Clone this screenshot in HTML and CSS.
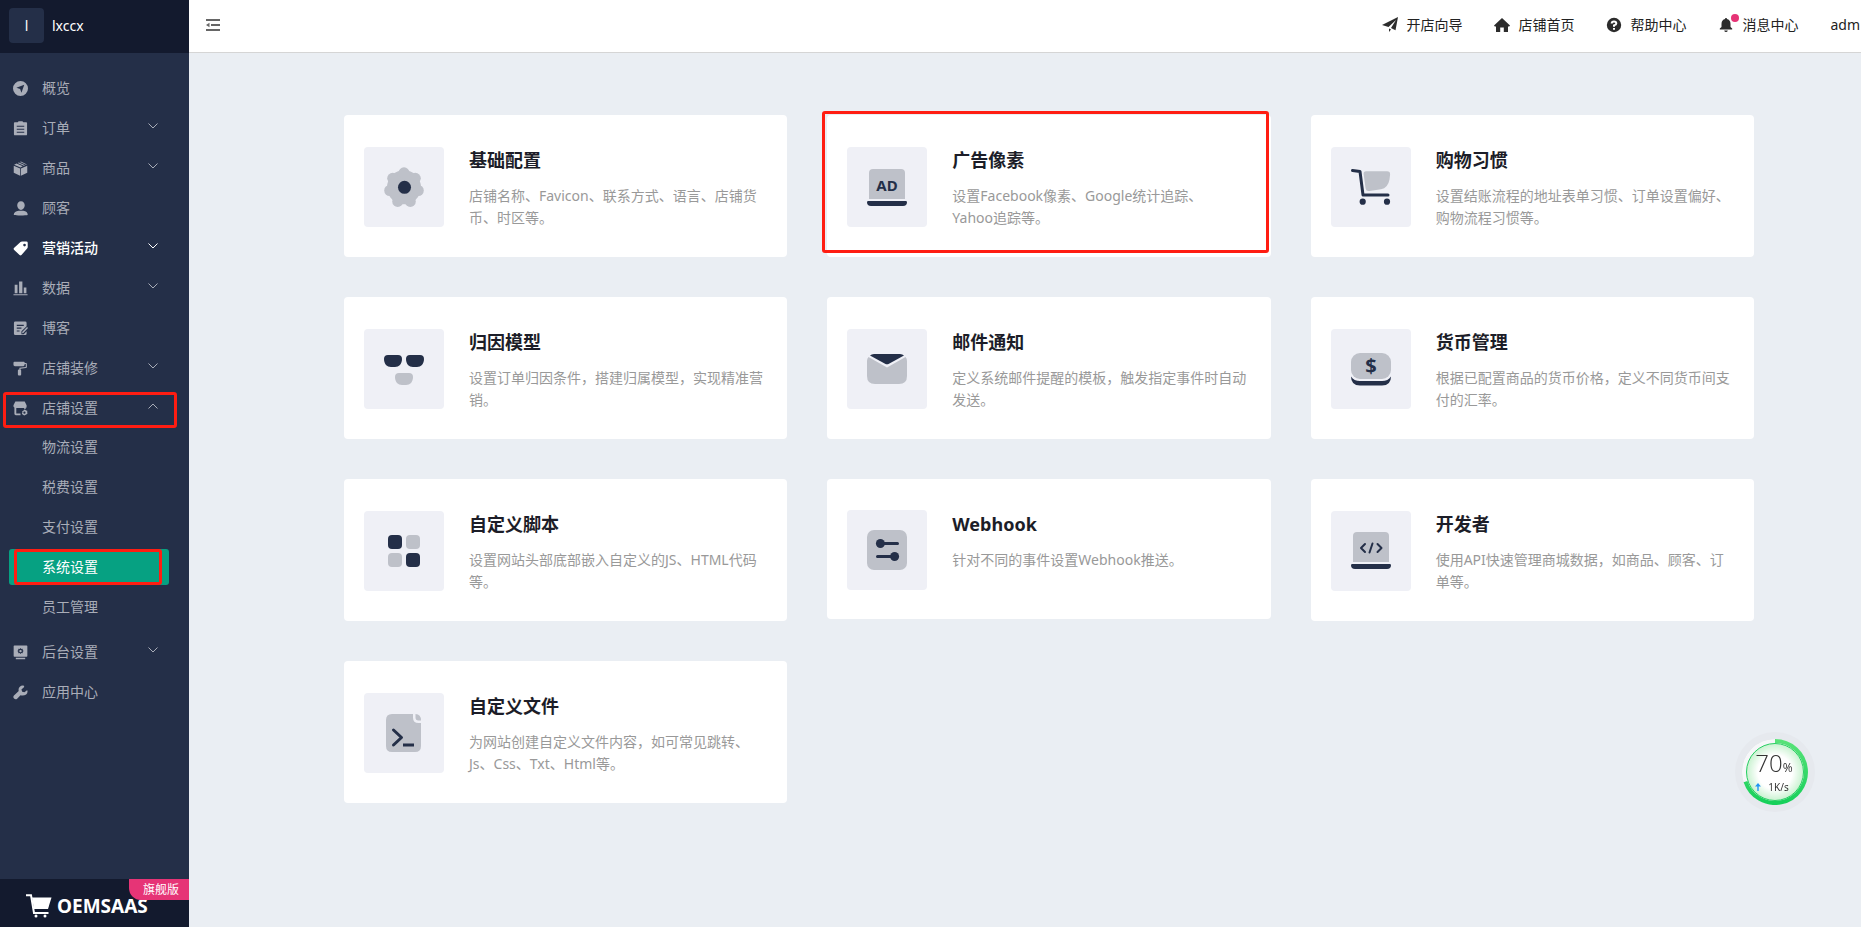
FILE: index.html
```html
<!DOCTYPE html>
<html lang="zh-CN">
<head>
<meta charset="utf-8">
<title>系统设置</title>
<link rel="stylesheet" href="styles.css">
</head>
<body>
<div class="app">
  <aside class="sidebar">
    <div class="shop"><span class="shop-avatar">l</span><span class="shop-name">lxccx</span></div>
    <nav class="menu">
      <a class="menu-item" href="#"><svg class="icon" viewBox="0 0 16 16"><path fill-rule="evenodd" d="M8 0a8 8 0 1 0 0 16A8 8 0 0 0 8 0zM12 4L9 12.500 7.600 8.600 3.600 7.200z"/></svg><span>概览</span></a>
      <a class="menu-item" href="#"><svg class="icon" viewBox="0 0 16 16"><path fill-rule="evenodd" d="M5 1.200L6 .3h4l1 .9h3q1 0 1 1V14q0 1.300-1.300 1.300H2.300Q1 15.300 1 14V2.200q0-1 1-1zM4 5v1h8V5zm0 3.200v1h8v-1zm0 3.200v1h8v-1z"/></svg><span>订单</span><svg class="chevron" viewBox="0 0 10 6"><path d="M.5.5L5 5 9.500.5"/></svg></a>
      <a class="menu-item" href="#"><svg class="icon" viewBox="0 0 16 16"><path d="M7.600 8v7.800L.8 12.500V5zM8.400 8v7.800l6.800-3.300V5zM1.200 4L3.800 2.700l6.600 3L8 6.900zM5 2.100L6.300 1.500l6.600 3-1.300.6zM7.400 1L8.500.4l6.300 3.300-.8.400z"/></svg><span>商品</span><svg class="chevron" viewBox="0 0 10 6"><path d="M.5.5L5 5 9.500.5"/></svg></a>
      <a class="menu-item" href="#"><svg class="icon" viewBox="0 0 16 16"><path d="M8.500.300c2.500 0 4 1.800 4 4.300S10.500 9.500 8.500 9.500s-4-2.400-4-4.900S6 .3 8.500.3zM.8 15c0-3 2.200-4.200 5.200-4.700h5c3 .5 4.700 1.700 4.700 4.700-2 .7-12.900.7-14.900 0z"/></svg><span>顾客</span></a>
      <a class="menu-item menu-item-bright" href="#"><svg class="icon" viewBox="0 0 16 16"><path fill-rule="evenodd" d="M1 7.500L8 1q.7-.6 1.600-.6h4.600q1.500 0 1.500 1.500v4.400q0 1-.6 1.600L9 15q-1 .9-2 0L1 9.200q-.8-.8 0-1.700zM11.300 3.300a1.400 1.400 0 1 0 2 2 1.400 1.400 0 0 0-2-2z"/></svg><span>营销活动</span><svg class="chevron" viewBox="0 0 10 6"><path d="M.5.5L5 5 9.500.5"/></svg></a>
      <a class="menu-item" href="#"><svg class="icon" viewBox="0 0 16 16"><path d="M1.800 4h3V13h-3zM6.500.500h3.500V13H6.500zM11.500 7h2.800v6h-2.800zM.5 14h15v1.300H.5z"/></svg><span>数据</span><svg class="chevron" viewBox="0 0 10 6"><path d="M.5.5L5 5 9.500.5"/></svg></a>
      <a class="menu-item" href="#"><svg class="icon" viewBox="0 0 16 16"><path fill-rule="evenodd" d="M2.500.500h10.500q1.500 0 1.500 1.500v3.500L9 11v3h2.500l3-3v2.500q0 1.500-1.500 1.500H2.500Q1 15 1 13.500V2Q1 .5 2.500.5zM4 4v1.200h7.500V4zm0 3v1.200h5V7zm0 3v1.200h3V10z"/><path d="M10 11.500L15 6.500l1 1-5 5.200-1.300.3z"/></svg><span>博客</span></a>
      <a class="menu-item" href="#"><svg class="icon" viewBox="0 0 16 16"><path d="M1.500.800h10Q12.500.8 12.500 2h1.300q1 0 1 1v3.500q0 1-1 1L8 8.300V9h-.2q.9.100.9 1v4.500q0 1-1 1H6.200q-1 0-1-1V10q0-1 1-1h.6V7.300l6.800-.8V3.200h-1.100q0 2.300-1.500 2.300H2Q.5 5.500.5 4V2Q.5.800 1.500.8z"/></svg><span>店铺装修</span><svg class="chevron" viewBox="0 0 10 6"><path d="M.5.5L5 5 9.500.5"/></svg></a>
      <div class="menu-group">
        <a class="menu-item" href="#"><svg class="icon" viewBox="0 0 16 16"><path fill-rule="evenodd" d="M2.500.500h10l2 4v1.800q0 1-1 1v1.200H12v-1H3.500v5.800H8v1.900H3q-1.500 0-1.500-1.500V7q-1-.3-1-1.300V4.500z"/><path fill-rule="evenodd" d="M12 9l1 .2 1 .8 1.200.5v1.800l.3 1-1.300 1.200L12 15.500l-1.800-1-.7-1.200.5-1-.2-1.400 1.200-.6zm.2 2.200a1.200 1.200 0 1 0 0 2.400 1.200 1.200 0 0 0 0-2.400z"/></svg><span>店铺设置</span><svg class="chevron" viewBox="0 0 10 6"><path d="M.5 5.500L5 1l4.500 4.500"/></svg></a>
        <span class="mark mark-group"></span>
      </div>
      <div class="submenu">
        <a class="sub-item" href="#">物流设置</a>
        <a class="sub-item" href="#">税费设置</a>
        <a class="sub-item" href="#">支付设置</a>
        <a class="sub-item sub-item-active" href="#">系统设置<span class="mark mark-sub"></span></a>
        <a class="sub-item" href="#">员工管理</a>
      </div>
      <a class="menu-item" href="#"><svg class="icon" viewBox="0 0 16 16"><path fill-rule="evenodd" d="M1.500.500h13q.8 0 .8.800v10.400q0 .8-.8.800h-13q-.8 0-.8-.8V1.300q0-.8.8-.8zM8 3.200l-.9 1-1.400-.1-.1 1.400-1 .9 1 .9.1 1.400 1.400-.1.900 1 .9-1 1.400.1.100-1.400 1-.9-1-.9-.1-1.400-1.400.1zm0 2a1.300 1.300 0 1 1 0 2.600 1.300 1.300 0 0 1 0-2.600zM3 13.700h10v1.600H3z"/></svg><span>后台设置</span><svg class="chevron" viewBox="0 0 10 6"><path d="M.5.5L5 5 9.500.5"/></svg></a>
      <a class="menu-item" href="#"><svg class="icon" viewBox="0 0 16 16"><path d="M11.800.900q-2.600-.8-4.500 1t-1.200 4.500L1 11.200q-1.300 1.600.1 3.300 1.700 1.400 3.300.1L8 11q3.500.800 6-.8 1.700-1.500 1.500-4.200l-.6-.5-2.700 2.300-2.400-.6-.8-2.500L11.900 2z"/></svg><span>应用中心</span></a>
    </nav>
    <div class="brand">
      <svg class="brand-cart" viewBox="0 0 26 24"><path fill="none" stroke="#fff" stroke-width="2" d="M0 1.200h5L8 19h14.500"/><path d="M6 3.500h19.500L22 15H8z"/><circle cx="10" cy="22" r="1.500"/><circle cx="19" cy="22" r="1.500"/></svg>
      <span class="brand-name">OEMSAAS</span>
      <span class="edition">旗舰版</span>
    </div>
  </aside>

  <div class="page">
    <header class="topbar">
      <button class="fold" type="button" aria-label="收起菜单"><svg viewBox="0 0 14 12"><path d="M0 0h14v2H0zM5 5h9v2H5zM0 10h14v2H0zM0 6l3.500-2.300v4.600z"/></svg></button>
      <nav class="quick">
        <a href="#"><svg viewBox="0 0 16 16"><path d="M16 0L13.500 13.200 9 11 14 3 6.500 10 0 8zM7 11.500l2 1L7 15z"/></svg>开店向导</a>
        <a href="#"><svg viewBox="0 0 16 16"><path d="M8 1l8 7.500-.8.900H14V15h-4.200v-4.500H6.200V15H2V9.400H.8L0 8.500z"/></svg>店铺首页</a>
        <a href="#"><svg viewBox="0 0 16 16"><circle cx="8" cy="8" r="7.200"/><path fill="none" stroke="#fff" stroke-width="2" d="M5.700 6.500Q5.700 4.500 8 4.500t2.300 1.900Q10.300 7.700 8 8.400v1.400"/><path fill="#fff" d="M7 11h2v1.800H7z"/></svg>帮助中心</a>
        <a href="#"><svg viewBox="0 0 16 16"><path d="M7.200 1h1.600v1q3.700.8 3.700 5v3l1.700 1.500v1H1.800v-1L3.500 10V7q0-4.200 3.700-5zM6.200 13.500h3.600Q9.500 15 8 15t-1.800-1.500z"/></svg>消息中心<span class="dot"></span></a>
        <a href="#">adm</a>
      </nav>
    </header>

    <main class="content">
      <a class="card" href="#">
        <svg class="tile" viewBox="0 0 80 80"><g class="soft"><circle cx="40" cy="40.300" r="17"/><circle cx="40" cy="25.800" r="5.500"/><circle cx="51.300" cy="31.300" r="5.500"/><circle cx="28.700" cy="31.300" r="5.500"/><circle cx="54.300" cy="43.500" r="5.500"/><circle cx="25.700" cy="43.500" r="5.500"/><circle cx="46.300" cy="54.400" r="5.500"/><circle cx="33.700" cy="54.400" r="5.500"/></g><circle cx="40.500" cy="40.300" r="6.500"/></svg>
        <div class="info"><h2>基础配置</h2><p>店铺名称、Favicon、联系方式、语言、店铺货币、时区等。</p></div>
      </a>
      <a class="card" href="#">
        <svg class="tile" viewBox="0 0 80 80"><path class="soft" d="M26 22h28q4 0 4 4v26H22V26q0-4 4-4z"/><path d="M21.500 54h37q1.500 0 1.500 1 0 4-4 4H24q-4 0-4-4 0-1 1.500-1z"/><text class="ad" x="40" y="44" text-anchor="middle">AD</text></svg>
        <div class="info"><h2>广告像素</h2><p>设置Facebook像素、Google统计追踪、<br>Yahoo追踪等。</p></div>
        <span class="mark mark-card"></span>
      </a>
      <a class="card" href="#">
        <svg class="tile" viewBox="0 0 80 80"><path class="soft" d="M35 24.300h21q3.300 0 3.100 3.200l-.6 5q-1.500 8.500-8.500 9.700l-11.500 1.700q-3.500.5-3.900-2.500l-2-14.500q-.2-2.600 2.400-2.600z"/><path class="line" d="M21.500 23.500l7.500 1L32 48h25"/><circle cx="31.700" cy="54.700" r="3.100"/><circle cx="56" cy="54.700" r="3.100"/></svg>
        <div class="info"><h2>购物习惯</h2><p>设置结账流程的地址表单习惯、订单设置偏好、购物流程习惯等。</p></div>
      </a>
      <a class="card" href="#">
        <svg class="tile" viewBox="0 0 80 80"><path d="M24 26h10q4 0 4 4c0 5-3 8-7 8h-4c-4 0-7-3-7-8q0-4 4-4zM46 26h10q4 0 4 4c0 5-3 8-7 8h-4c-4 0-7-3-7-8q0-4 4-4z"/><path class="soft" d="M35 44h10q4 0 4 4c0 5-3 8-7 8h-4c-4 0-7-3-7-8q0-4 4-4z"/></svg>
        <div class="info"><h2>归因模型</h2><p>设置订单归因条件，搭建归属模型，实现精准营销。</p></div>
      </a>
      <a class="card" href="#">
        <svg class="tile" viewBox="0 0 80 80"><path class="soft" d="M21.500 28L40 38.500 58.500 28q1.500 1.500 1.500 4v15q0 8-8 8H28q-8 0-8-8V32q0-2.500 1.500-4z"/><path d="M23 26.500q1.500-1.500 4-1.500h26q2.500 0 4 1.500L41.500 35q-1.500.7-3 0z"/></svg>
        <div class="info"><h2>邮件通知</h2><p>定义系统邮件提醒的模板，触发指定事件时自动发送。</p></div>
      </a>
      <a class="card" href="#">
        <svg class="tile" viewBox="0 0 80 80"><rect class="soft" x="20" y="24" width="40" height="26" rx="9"/><path d="M20 47.500q3 4.500 9 4.500h22q6 0 9-4.500 0 9-9 9H29q-9 0-9-9z"/><text class="dollar" x="40" y="44" text-anchor="middle">$</text></svg>
        <div class="info"><h2>货币管理</h2><p>根据已配置商品的货币价格，定义不同货币间支付的汇率。</p></div>
      </a>
      <a class="card" href="#">
        <svg class="tile" viewBox="0 0 80 80"><rect x="24" y="24" width="14" height="14" rx="4"/><rect class="soft" x="42" y="24" width="14" height="14" rx="4"/><rect class="soft" x="24" y="42" width="14" height="14" rx="4"/><rect x="42" y="42" width="14" height="14" rx="4"/></svg>
        <div class="info"><h2>自定义脚本</h2><p>设置网站头部底部嵌入自定义的JS、HTML代码等。</p></div>
      </a>
      <a class="card" href="#">
        <svg class="tile" viewBox="0 0 80 80"><rect class="soft" x="20" y="20" width="40" height="40" rx="7"/><path class="line" d="M33 33.500h17.500M30.500 46.500H48"/><circle cx="33.400" cy="33.500" r="4.500"/><circle cx="47.600" cy="46.500" r="4.500"/></svg>
        <div class="info"><h2>Webhook</h2><p>针对不同的事件设置Webhook推送。</p></div>
      </a>
      <a class="card" href="#">
        <svg class="tile" viewBox="0 0 80 80"><path class="soft" d="M26 21h28q4 0 4 4v26H22V25q0-4 4-4z"/><path d="M21.500 53h37q1.500 0 1.500 1 0 4-4 4H24q-4 0-4-4 0-1 1.500-1z"/><path class="line thin" d="M34 33l-4 4 4 4M41.500 32.500l-3 9M46.500 33l4 4-4 4"/></svg>
        <div class="info"><h2>开发者</h2><p>使用API快速管理商城数据，如商品、顾客、订单等。</p></div>
      </a>
      <a class="card" href="#">
        <svg class="tile" viewBox="0 0 80 80"><path class="soft" d="M28 21h21v3.500q0 5.500 5.500 5.500H57v23q0 6-6 6H28q-6 0-6-6V27q0-6 6-6zM51.500 21q5.500 0 5.500 6.500h-2.500q-3 0-3-3z"/><path class="line" d="M29.500 37l8 7.500-8 7.500"/><path d="M39 50.500h11v3H39z"/></svg>
        <div class="info"><h2>自定义文件</h2><p>为网站创建自定义文件内容，如可常见跳转、Js、Css、Txt、Html等。</p></div>
      </a>
    </main>
  </div>

  <div class="meter">
    <svg class="meter-ring" viewBox="0 0 66 66">
      <defs><radialGradient id="glow"><stop offset="60%" stop-color="#fff"/><stop offset="100%" stop-color="#c9f2d0"/></radialGradient>
      <linearGradient id="ring" x1="0" y1="0" x2="0" y2="1"><stop offset="0" stop-color="#58e278"/><stop offset="1" stop-color="#16d05a"/></linearGradient></defs>
      <circle cx="33" cy="33" r="33" fill="#f6f7f9"/>
      <circle cx="33" cy="33" r="28.500" fill="url(#glow)" stroke="#27cf62"/>
      <path fill="none" stroke="url(#ring)" stroke-width="4" d="M33 2A31 31 0 1 1 3.500 42.600"/>
    </svg>
    <div class="meter-value">70<small>%</small></div>
    <div class="meter-rate"><svg viewBox="0 0 6 8"><path d="M3 0l3 3.500H3.700V8H2.300V3.500H0z"/></svg>1K/s</div>
  </div>
</div>
</body>
</html>
```
FILE: styles.css
```css
* { box-sizing: border-box; }

body {
  margin: 0;
  font-family: "Noto Sans", "Noto Sans CJK SC", sans-serif;
  font-size: 14px;
  line-height: 22px;
  color: #222;
  background: #eaeef3;
}

a { color: inherit; text-decoration: none; }

.app { display: flex; min-height: 100vh; overflow: hidden; position: relative; }

/* Sidebar */
.sidebar {
  flex: 0 0 189px;
  display: flex;
  flex-direction: column;
  background: #242f48;
  color: #a9adb8;
}
.shop {
  display: flex;
  align-items: center;
  gap: 8px;
  height: 53px;
  padding: 0 9px 2px;
  background: #131a2e;
  color: #fff;
}
.shop-avatar {
  width: 35px;
  height: 35px;
  line-height: 35px;
  text-align: center;
  border-radius: 4px;
  background: #242f48;
}
.menu { flex: 1; padding-top: 15px; }
.menu-item {
  display: flex;
  align-items: center;
  gap: 14px;
  height: 40px;
  padding: 0 31px 0 13px;
}
.menu-item-bright { color: #fff; font-weight: 500; }
.icon { width: 15px; height: 15px; fill: currentColor; }
.chevron {
  width: 10px;
  height: 6px;
  margin: 0 0 4px auto;
  fill: none;
  stroke: currentColor;
}
.menu-group { position: relative; }
.submenu { padding: 1px 0 3px; }
.sub-item {
  display: block;
  position: relative;
  margin: 0 20px 4px 9px;
  padding-left: 33px;
  line-height: 36px;
  border-radius: 3px;
}
.sub-item-active { background: #06a182; color: #fff; }
.brand {
  position: relative;
  display: flex;
  align-items: center;
  gap: 5px;
  height: 48px;
  padding: 6px 0 0 26px;
  background: #131a2e;
  color: #fff;
}
.brand-cart { width: 26px; height: 24px; fill: #fff; }
.brand-name { font-size: 19px; font-weight: 700; }
.edition {
  position: absolute;
  top: 0;
  right: 0;
  padding: 0 10px 0 14px;
  font-size: 12px;
  line-height: 21px;
  border-bottom-left-radius: 12px;
  background: #e63476;
}

/* Red frames around highlighted entries */
.mark {
  position: absolute;
  border: 3px solid #ff1d12;
  border-radius: 3px;
  pointer-events: none;
}
.mark-group { top: 4px; right: 12px; bottom: 0; left: 3px; }
.mark-sub { top: 0; right: 7px; bottom: 0; left: 5px; }
.mark-card { top: -4px; right: 2px; bottom: 4px; left: -5px; }

/* Top bar */
.page { flex: 1; min-width: 0; }
.topbar {
  display: flex;
  align-items: center;
  justify-content: space-between;
  height: 53px;
  padding: 0 1px 3px 17px;
  background: #fff;
  border-bottom: 1px solid #d5d5d5;
}
.fold { padding: 0; border: 0; background: none; line-height: 0; }
.fold svg { width: 14px; height: 12px; fill: #666; }
.quick { display: flex; gap: 32px; }
.quick a { display: flex; align-items: center; gap: 8px; position: relative; }
.quick svg { width: 16px; height: 16px; fill: #2c2c2c; }
.dot {
  position: absolute;
  top: 0;
  left: 13px;
  width: 8px;
  height: 8px;
  border-radius: 50%;
  background: #e63476;
}

/* Settings cards */
.content {
  display: grid;
  grid-template-columns: repeat(3, 1fr);
  align-items: start;
  gap: 40px;
  padding: 62px 107px 40px 155px;
}
.card {
  position: relative;
  display: flex;
  align-items: center;
  gap: 25px;
  min-height: 140px;
  padding: 29px 20px 28px;
  border-radius: 4px;
  background: #fff;
}
.tile {
  flex: none;
  width: 80px;
  height: 80px;
  border-radius: 4px;
  background: #eff0f6;
  fill: #242f48;
}
.tile .soft { fill: #bec1c9; }
.tile .line {
  fill: none;
  stroke: #242f48;
  stroke-width: 3;
  stroke-linecap: round;
  stroke-linejoin: round;
}
.tile .thin { stroke-width: 2; }
.ad { font-size: 15px; font-weight: 700; }
.dollar { font-size: 20px; font-weight: 700; }
.info { flex: 1; align-self: flex-start; }
.info h2 {
  margin: 0 0 9px;
  font-size: 18px;
  line-height: 32px;
  font-weight: 700;
  color: #1c1d28;
}
.info p { margin: 0; color: #999; }

/* Floating usage meter */
.meter {
  position: fixed;
  right: 53px;
  bottom: 122px;
  width: 66px;
  height: 66px;
  padding: 12px 2px 0 0;
  border-radius: 50%;
  box-shadow: 0 0 0 7px #e6e9ee, 0 0 4px 1px #bbb;
  text-align: center;
  color: #333;
}
.meter-ring { position: absolute; top: 0; left: 0; width: 66px; height: 66px; }
.meter-value {
  position: relative;
  font-family: "Open Sans", sans-serif;
  font-size: 24px;
  font-weight: 300;
  line-height: 24px;
}
.meter-value small { font-size: 12px; font-weight: 400; }
.meter-rate {
  position: relative;
  display: flex;
  justify-content: center;
  align-items: center;
  gap: 7px;
  padding-right: 4px;
  font-size: 10px;
  line-height: 14px;
}
.meter-rate svg { width: 6px; height: 8px; fill: #2196f3; }
```
